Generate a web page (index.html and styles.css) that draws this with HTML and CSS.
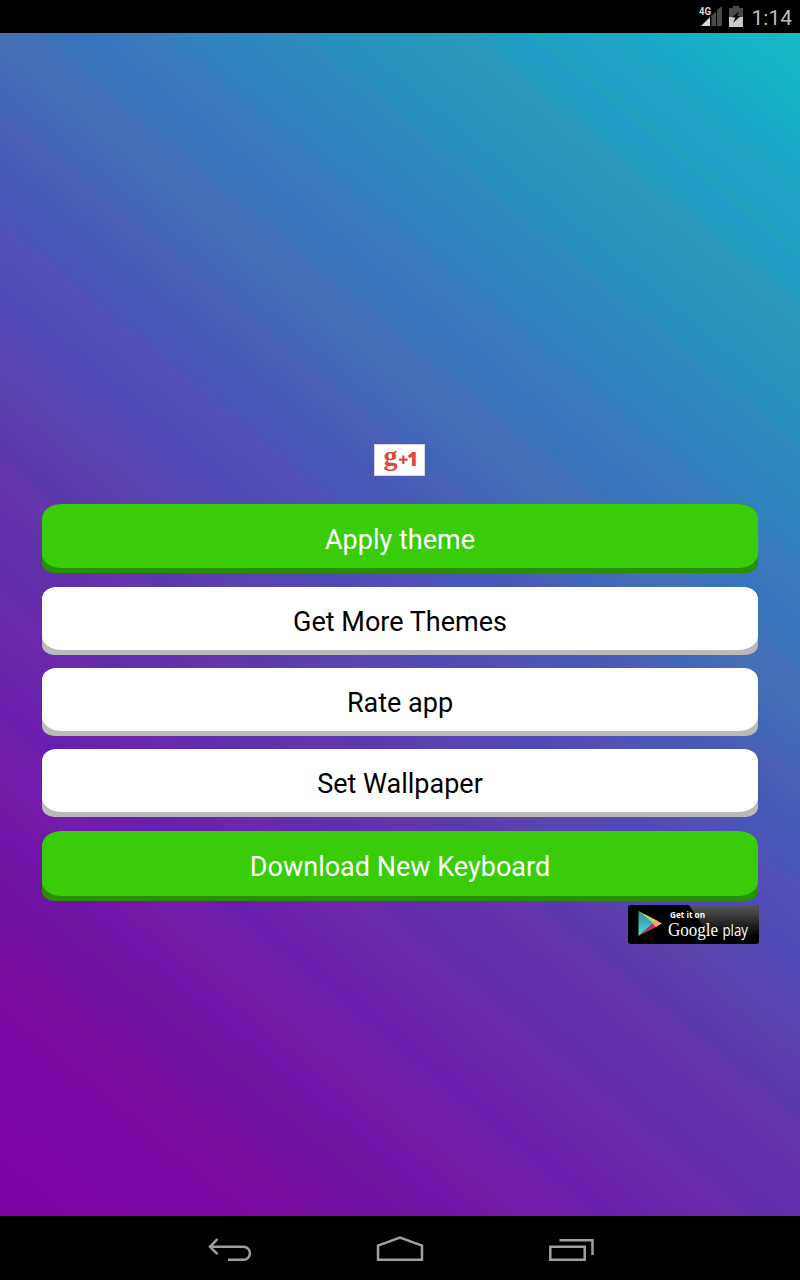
FILE: index.html
```
<!DOCTYPE html>
<html lang="en">
<head>
<meta charset="utf-8">
<title>Keyboard theme</title>
<link rel="stylesheet" href="styles.css">
</head>
<body>
<div class="screen">
  <header class="status">
    <svg class="signal" width="24" height="22" viewBox="0 0 24 22">
      <path d="M2 21L7 16V21Z" fill="#d8d8d8"/>
      <path d="M7 16L11 12V21H7Z" fill="#d8d8d8"/>
      <path d="M12.500 10.500L17 6.500V21H12.500ZM18 5L23 1V21H18Z" fill="#484b49"/>
      <text x="0" y="10" class="net" textLength="12" lengthAdjust="spacingAndGlyphs">4G</text>
    </svg>
    <svg class="battery" width="14" height="21" viewBox="0 0 14 21">
      <path d="M0 2H4V0H10V2H14V12H0Z" fill="#484b49"/>
      <path d="M0 11H14V21H0Z" fill="#c8c8c8"/>
      <path d="M10.500 5L3 11.500H6.500L4 17L11.500 10H8Z" fill="#050505"/>
    </svg>
    <span class="clock">1:14</span>
  </header>
  <main class="content">
    <svg class="plusone" width="51" height="32" viewBox="0 0 51 32">
      <rect x="0.500" y="0.500" width="50" height="31" fill="#fff" stroke="#d8d8de"/>
      <text x="9.500" y="20.500" class="g" textLength="14" lengthAdjust="spacingAndGlyphs">g</text>
      <path d="M29.300 11.500V20M25 15.700H33.600" stroke="#dc4a38" stroke-width="2.200"/>
      <text x="33" y="22" class="one">1</text>
    </svg>
    <button class="btn green first"><span>Apply theme</span></button>
    <button class="btn"><span>Get More Themes</span></button>
    <button class="btn"><span>Rate app</span></button>
    <button class="btn"><span>Set Wallpaper</span></button>
    <button class="btn green last"><span>Download New Keyboard</span></button>
    <svg class="play" width="131" height="39" viewBox="0 0 131 39">
      <defs>
        <linearGradient id="gloss" x1="0" y1="0" x2="0" y2="1"><stop offset="0" stop-color="#585858"/><stop offset="1" stop-color="#060606"/></linearGradient>
        <linearGradient id="blue" x1="0" y1="0" x2="0" y2="1"><stop offset="0" stop-color="#2f8d9c"/><stop offset="1" stop-color="#4fdcd8"/></linearGradient>
      </defs>
      <rect width="131" height="39" rx="3" fill="#000"/>
      <path d="M61 0H128Q131 0 131 3V30H81Z" fill="url(#gloss)"/>
      <path d="M10.500 6V31L25 18.500Z" fill="url(#blue)"/>
      <path d="M10.500 6L29 15.500L25 18.500Z" fill="#b9d48b"/>
      <path d="M10.500 31L29 21.500L25 18.500Z" fill="#d52d65"/>
      <path d="M28 15L34 18.500L28 22L24.500 18.500Z" fill="#f9a566"/>
      <text x="42" y="13" class="getit" textLength="35" lengthAdjust="spacingAndGlyphs">Get it on</text>
      <text x="40" y="30.500" class="google" textLength="50" lengthAdjust="spacingAndGlyphs">Google</text>
      <text x="94.500" y="30.500" class="playword" textLength="25.500" lengthAdjust="spacingAndGlyphs">play</text>
    </svg>
  </main>
  <nav class="nav">
    <svg width="400" height="50" viewBox="0 0 400 50" fill="none" stroke="#a0a0a0" stroke-width="2.500">
      <path d="M17.500 14L10 21.800L17.500 29.200M10 21.800H43.500A6.400 6.400 0 0 1 43.500 34.700H28"/>
      <path d="M178 34.700V20.700L200 12.700L222 20.700V34.700Z"/>
      <path d="M350.300 21.700H384.700V34.700H350.300ZM359.500 15.200H392.500V30"/>
    </svg>
  </nav>
</div>
</body>
</html>
```
FILE: styles.css
```
body {
  margin: 0;
  background: #000;
  font-family: Roboto, sans-serif;
}
.screen {
  width: 800px;
  height: 1280px;
  display: flex;
  flex-direction: column;
  overflow: hidden;
}
.status {
  height: 33px;
  box-sizing: border-box;
  display: flex;
  justify-content: flex-end;
  align-items: flex-start;
  padding: 5px 8px 0 0;
}
.battery { margin: 1px 9px 0 6px; }
.net { font: bold 11.500px Roboto, sans-serif; fill: #d8d8d8; }
.clock {
  color: #bebebe;
  font-size: 21px;
  line-height: 26px;
}
.content {
  height: 1183px;
  box-sizing: border-box;
  padding: 411px 41px 0 42px;
  display: flex;
  flex-direction: column;
  align-items: flex-start;
  background: linear-gradient(39.700deg,
    #7b05a3 0%, #7b08a5 9.700%, #7a0da2 14%, #7010a5 17%, #7014a2 19%, #7214ac 21%,
    #721aa4 22.800%, #741cac 24%, #741cac 25.200%, #681eac 27.500%, #6b29ab 33%,
    #602cac 35%, #6537ab 40.300%, #5a3aab 41.700%, #5d3eae 43.400%, #5a43ac 45%,
    #5a45b3 46.500%, #5049b5 49.400%, #5450b8 53.200%, #4a55b8 54.500%,
    #4759b5 57%, #4a61b5 59.200%, #4165b8 60.500%, #4470b5 64%, #4270bb 65.500%,
    #3873b8 66%, #3873bd 67.600%, #3a7bbc 70.700%, #3282bf 72.200%,
    #3088bf 76.100%, #308bbd 77.300%, #278fbf 78.200%, #2893bd 80%,
    #2a99bb 84.700%, #1f9dc0 85.900%, #1f9cc8 87.400%, #20a3bf 88.100%,
    #20a0c8 88.900%, #20a5c6 91.400%, #18a8c8 92.800%, #16b3c6 96.400%, #16b8c6 100%);
}
.plusone {
  align-self: center;
  flex: none;
  margin-right: 2px;
  margin-bottom: 28px;
}
.g { font: bold 27px "Liberation Serif", serif; fill: #dc4a38; }
.one { font: 800 19px "Open Sans", sans-serif; fill: #dc4a38; }
.btn {
  width: 716px;
  height: 68px;
  box-sizing: border-box;
  flex: none;
  border: 0;
  padding: 1px 0 0;
  margin: 0 0 13px;
  position: relative;
  overflow: hidden;
  border-radius: 14px 14px 12px 12px / 12px 12px 10px 10px;
  background: #bababc;
  color: #000;
  font: 27px/60px Roboto, sans-serif;
  z-index: 0;
}
.btn::before {
  content: "";
  position: absolute;
  z-index: -1;
  inset: 0 0 5px;
  border-radius: 14px 14px 20px 20px / 12px 12px 14px 14px;
  background: #fff;
}
.green {
  height: 69px;
  margin-bottom: 14px;
  background: #289000;
  color: #fff;
  border-radius: 20px 20px 12px 12px / 14px 14px 10px 10px;
}
.green::before {
  background: #39cd09;
  border-radius: 20px / 14px;
}
.first { padding-top: 3px; }
.last { height: 70px; margin: 1px 0 4px; }
.play { align-self: flex-end; display: block; }
.getit { font: bold 8.500px "Open Sans", sans-serif; fill: #fff; }
.google { font: 19px "Liberation Serif", serif; fill: #fff; }
.playword { font: 16px "Open Sans", sans-serif; fill: #fff; }
.nav {
  height: 64px;
  display: flex;
  justify-content: center;
  align-items: flex-start;
  padding-top: 9px;
  box-sizing: border-box;
}
```
